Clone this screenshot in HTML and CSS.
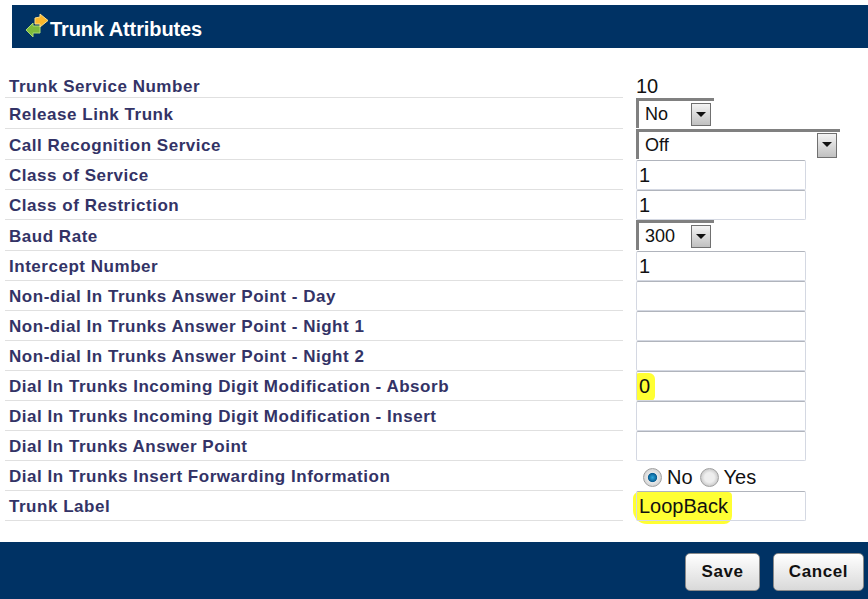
FILE: index.html

```html
<!DOCTYPE html>
<html lang="en">
  <head>
    <meta charset="UTF-8">
    <meta name="viewport" content="width=device-width, initial-scale=1.0">
    <title>Trunk Attributes</title>
    <link rel="stylesheet" href="styles.css">
  </head>
<body>
  <div class="titulo">
    <svg class="icono" width="24" height="25" viewBox="0 0 24 25">
      <path d="M1 17 L8 10 L8 13 L15 13 L15 20 L8 20 L8 24 Z" fill="#7dbb3c" stroke="#a9d873" stroke-width="1"/>
      <path d="M15 1 L23 7.5 L15 14 L15 11 L10 11 L10 5 L15 4 Z" fill="#fbb72c" stroke="#fddc85" stroke-width="1"/>
    </svg>
    <h1>Trunk Attributes</h1>
  </div>

  <div class="tabla">
    <div class="fila primera">
      <label>Trunk Service Number</label>
      <div class="valor texto">10</div>
    </div>
    <div class="fila alta">
      <label>Release Link Trunk</label>
      <div class="valor">
        <div class="combo corto"><span>No</span><i class="flecha"></i></div>
      </div>
    </div>
    <div class="fila alta">
      <label>Call Recognition Service</label>
      <div class="valor">
        <div class="combo largo"><span>Off</span><i class="flecha"></i></div>
      </div>
    </div>
    <div class="fila">
      <label>Class of Service</label>
      <div class="valor"><input type="text" value="1"></div>
    </div>
    <div class="fila">
      <label>Class of Restriction</label>
      <div class="valor"><input type="text" value="1"></div>
    </div>
    <div class="fila alta">
      <label>Baud Rate</label>
      <div class="valor">
        <div class="combo corto"><span>300</span><i class="flecha"></i></div>
      </div>
    </div>
    <div class="fila">
      <label>Intercept Number</label>
      <div class="valor"><input type="text" value="1"></div>
    </div>
    <div class="fila">
      <label>Non-dial In Trunks Answer Point - Day</label>
      <div class="valor"><input type="text"></div>
    </div>
    <div class="fila">
      <label>Non-dial In Trunks Answer Point - Night 1</label>
      <div class="valor"><input type="text"></div>
    </div>
    <div class="fila">
      <label>Non-dial In Trunks Answer Point - Night 2</label>
      <div class="valor"><input type="text"></div>
    </div>
    <div class="fila">
      <label>Dial In Trunks Incoming Digit Modification - Absorb</label>
      <div class="valor">
        <span class="marca marca-cero"></span>
        <input type="text" value="0">
      </div>
    </div>
    <div class="fila">
      <label>Dial In Trunks Incoming Digit Modification - Insert</label>
      <div class="valor"><input type="text"></div>
    </div>
    <div class="fila">
      <label>Dial In Trunks Answer Point</label>
      <div class="valor"><input type="text"></div>
    </div>
    <div class="fila">
      <label>Dial In Trunks Insert Forwarding Information</label>
      <div class="valor radios">
        <input type="radio" name="forward" checked><span>No</span>
        <input type="radio" name="forward"><span>Yes</span>
      </div>
    </div>
    <div class="fila">
      <label>Trunk Label</label>
      <div class="valor">
        <span class="marca marca-label"></span>
        <input type="text" value="LoopBack">
      </div>
    </div>
  </div>

  <div class="pie">
    <button class="guardar">Save</button>
    <button class="cancelar">Cancel</button>
  </div>
</body>
</html>
```

FILE: styles.css

```css
:root {
  --color-azul: #003264;
  --color-etiqueta: #333366;
  --color-linea: #e0e0e0;
  --color-borde: #d4d8e2;
  --color-marca: #ffff33;
}

html, body {
  margin: 0;
  padding: 0;
}

body {
  width: 868px;
  height: 599px;
  overflow: hidden;
  background: white;
  font-family: "Liberation Sans", Arial, sans-serif;
  padding-top: 5px;
  box-sizing: border-box;
}

.titulo {
  position: relative;
  height: 43px;
  margin-left: 12px;
  background-color: var(--color-azul);
  display: flex;
  align-items: center;
  padding-left: 38px;
}

.titulo h1 {
  margin: 0;
  padding-top: 5px;
  color: white;
  font-size: 20px;
  font-weight: bold;
  letter-spacing: -0.1px;
}

.icono {
  position: absolute;
  left: 13px;
  top: 8px;
  width: 24px;
  height: 25px;
}

.tabla {
  margin-top: 19px;
  margin-left: 5px;
}

.fila {
  display: flex;
  height: 30px;
}

.fila.alta {
  height: 31px;
}

.fila.primera {
  height: 31px;
}

.fila label {
  width: 618px;
  box-sizing: border-box;
  padding-left: 4px;
  padding-top: 6px;
  border-bottom: 1px solid var(--color-linea);
  color: var(--color-etiqueta);
  font-size: 17px;
  font-weight: bold;
  line-height: 20px;
  letter-spacing: 0.53px;
}

.fila.alta label {
  padding-top: 7px;
}

.fila.primera label {
  padding-top: 10px;
}

.valor {
  position: relative;
  margin-left: 13px;
  width: 215px;
}

.valor.texto {
  font-size: 20px;
  line-height: 22px;
  padding-top: 8px;
  color: #111;
}

input[type="text"] {
  position: relative;
  display: block;
  width: 170px;
  height: 30px;
  box-sizing: border-box;
  margin: 0;
  padding: 0 2px;
  border: 1px solid var(--color-borde);
  border-top-color: #b0b4bc;
  border-radius: 2px;
  background: transparent;
  font-family: inherit;
  font-size: 20px;
  color: #111;
}

.combo {
  display: flex;
  align-items: center;
  justify-content: space-between;
  box-sizing: border-box;
  height: 30px;
  border-top: 3px solid #808080;
  border-left: 3px solid #808080;
  padding: 0 3px 0 6px;
  font-size: 18px;
  color: #111;
  background: white;
}

.combo.corto {
  width: 78px;
}

.combo.largo {
  width: 204px;
}

.combo.largo .flecha {
  height: 25px;
}

.flecha {
  position: relative;
  width: 20px;
  height: 23px;
  box-sizing: border-box;
  border: 1px solid #707070;
  background: linear-gradient(#f4f4f4, #c0c0c0);
}

.flecha::after {
  content: "";
  position: absolute;
  left: 4px;
  top: 8px;
  border-left: 5px solid transparent;
  border-right: 5px solid transparent;
  border-top: 5px solid #111;
}

.marca {
  position: absolute;
  background-color: var(--color-marca);
}

.marca-cero {
  left: 0;
  top: 2px;
  width: 19px;
  height: 29px;
  border-radius: 3px 6px 6px 5px;
}

.marca-label {
  left: -3px;
  top: 1px;
  width: 99px;
  height: 32px;
  border-radius: 6px 4px 8px 14px;
}

.radios {
  display: flex;
  align-items: center;
  font-size: 20px;
  color: #111;
  padding-left: 7px;
  padding-top: 3px;
  box-sizing: border-box;
}

.radios span {
  margin-right: 7px;
  margin-left: 5px;
}

input[type="radio"] {
  appearance: none;
  width: 19px;
  height: 19px;
  margin: 0;
  border: 1px solid #a0a0a0;
  border-radius: 50%;
  background: radial-gradient(circle, #eeeeee 40%, #c8c8c8 75%, #f4f4f4 100%);
}

input[type="radio"]:checked {
  background: radial-gradient(circle, #2ea8dc 0, #0a5f94 35%, #e8e8e8 42%, #cfcfcf 80%, #f4f4f4 100%);
}

.pie {
  margin-top: 21px;
  height: 57px;
  background-color: var(--color-azul);
  display: flex;
  justify-content: flex-end;
  gap: 13px;
  padding: 11px 4px 0 0;
  box-sizing: border-box;
}

button {
  height: 38px;
  padding: 0;
  border: 1px solid #8a8a8a;
  border-radius: 5px;
  background: linear-gradient(#ffffff, #d9d9d9);
  color: #111;
  font-family: inherit;
  font-size: 17px;
  font-weight: bold;
  letter-spacing: 0.6px;
}

.guardar {
  width: 75px;
}

.cancelar {
  width: 91px;
}
```
